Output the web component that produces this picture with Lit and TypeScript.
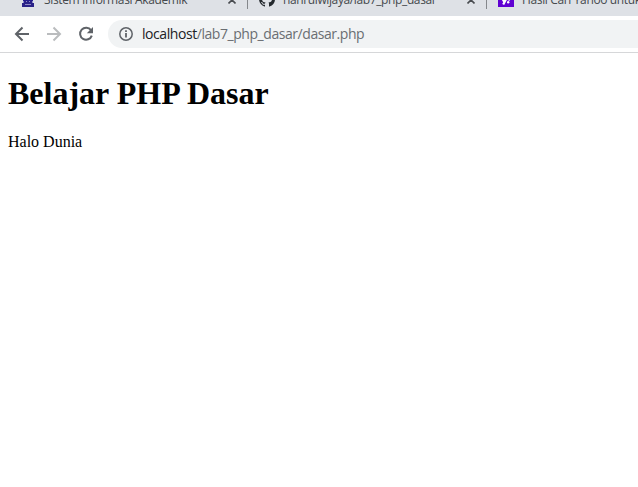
import { LitElement, html, css, svg } from "lit";
import { customElement } from "lit/decorators.js";

const campus = svg`<path fill="#241c8c" d="M3 0h10v10H3z"/><path fill="#2a2288" d="M4 10h8v2H4zM2 12h12v4H2z"/><path fill="#8f8bc8" d="M3 10h1v2H3zM12 10h1v2h-1zM6 10h1v1H6zM9 10h1v1H9zM5 13h6v1H5z"/>`;
const github = svg`<path fill="#24292e" d="M8 0C3.58 0 0 3.58 0 8c0 3.54 2.29 6.53 5.47 7.59.4.07.55-.17.55-.38 0-.19-.01-.82-.01-1.49-2.01.37-2.53-.49-2.69-.94-.09-.23-.48-.94-.82-1.13-.28-.15-.68-.52-.01-.53.63-.01 1.08.58 1.23.82.72 1.21 1.87.87 2.33.66.07-.52.28-.87.51-1.07-1.78-.2-3.64-.89-3.64-3.95 0-.87.31-1.59.82-2.15-.08-.2-.36-1.02.08-2.12 0 0 .67-.21 2.2.82a7.6 7.6 0 0 1 4 0c1.53-1.04 2.2-.82 2.2-.82.44 1.1.16 1.92.08 2.12.51.56.82 1.27.82 2.15 0 3.07-1.87 3.75-3.65 3.95.29.25.54.73.54 1.48 0 1.07-.01 1.93-.01 2.2 0 .21.15.46.55.38A8 8 0 0 0 16 8c0-4.42-3.58-8-8-8z"/>`;
const yahoo = svg`<path fill="#6001d2" d="M0 0h16v16H0z"/><path fill="none" stroke="#fff" stroke-width="2.2" d="M3.2 5.500 6 10.500M9 6.500 5.200 13.500"/><path fill="none" stroke="#fff" stroke-width="2.2" d="M12.500 4 10.800 9.500"/><circle cx="10.200" cy="11.200" r="1.200" fill="#fff"/>`;

@customElement("app-root")
export class AppRoot extends LitElement {
  static styles = css`
    :host { display: block; height: 487px; background: #fff; overflow: hidden; }
    .tabs { display: flex; height: 16px; background: #dee1e6; overflow: hidden; font: 12px/16px "Open Sans", "Noto Sans", sans-serif; color: #45494d; }
    .tab { display: flex; flex: none; width: 238px; height: 16px; margin-top: -9px; padding-left: 11px; box-sizing: border-box; }
    .tab:first-child { width: 247px; padding-left: 20px; }
    .tab svg { flex: none; width: 16px; height: 16px; }
    .title { flex: none; width: 181px; margin: 1px 0 0 8px; white-space: nowrap; letter-spacing: -0.36px; }
    .repo { letter-spacing: -0.38px; }
    .tab .close { width: 8px; height: 8px; margin: 5px 0 0 3px; }
    .sep { flex: none; width: 1px; height: 9px; background: #85888c; }
    .bar { display: flex; align-items: center; height: 36px; padding-left: 14px; border-bottom: 1px solid #d6d7d9; }
    .nav { flex: none; width: 16px; height: 16px; margin-right: 16px; }
    .reload { margin-right: 14px; }
    .address { display: flex; align-items: center; flex: 1; height: 28px; padding-left: 10px; border-radius: 14px 0 0 14px; background: #f1f3f4; font: 14px/20px "Open Sans", "Noto Sans", sans-serif; letter-spacing: -0.44px; color: #6a6e72; white-space: nowrap; }
    .info { width: 16px; height: 16px; margin-right: 8px; }
    .host { color: #202124; }
    .page { padding: 0 8px; font: 16px/18px "Liberation Serif", serif; color: #000; }
    h1 { margin: 22px 0 21px; font-size: 32px; line-height: 37px; font-weight: bold; }
    p { margin: 0; }
  `;

  private tab(icon: unknown, title: string, cls = "") {
    return html`<div class="tab">
      <svg viewBox="0 0 16 16">${icon}</svg>
      <span class="title ${cls}">${title}</span>
      <svg class="close" viewBox="0 0 8 8"><path d="M.5.5l7 7M7.5.5l-7 7" stroke="#494c50" stroke-width="1.6"/></svg>
    </div>`;
  }

  render() {
    return html`
      <div class="tabs">
        ${this.tab(campus, "Sistem Informasi Akademik")}<i class="sep"></i>
        ${this.tab(github, "hanrulwijaya/lab7_php_dasar", "repo")}<i class="sep"></i>
        ${this.tab(yahoo, "Hasil Cari Yahoo untuk")}
      </div>
      <div class="bar">
        <svg class="nav" viewBox="0 0 16 16"><path d="M15 8H2M8.5 1.5 2 8l6.500 6.500" fill="none" stroke="#5f6368" stroke-width="2"/></svg>
        <svg class="nav" viewBox="0 0 16 16"><path d="M1 8h13M7.500 1.500 14 8l-6.500 6.500" fill="none" stroke="#babcbe" stroke-width="2"/></svg>
        <svg class="nav reload" viewBox="0 0 16 16"><path d="M13 4.200A6 6 0 1 0 13.800 9.600" fill="none" stroke="#5f6368" stroke-width="2"/><path d="M15 1v6.200H8.800z" fill="#5f6368"/></svg>
        <div class="address">
          <svg class="info" viewBox="0 0 16 16"><circle cx="8" cy="8" r="6.200" fill="none" stroke="#5f6368" stroke-width="1.500"/><path d="M7.100 7h1.800v4.500H7.100zM7.100 4.300h1.800V6H7.100z" fill="#5f6368"/></svg>
          <span class="url"><span class="host">localhost</span>/lab7_php_dasar/dasar.php</span>
        </div>
      </div>
      <main class="page"><h1>Belajar PHP Dasar</h1><p>Halo Dunia</p></main>
    `;
  }
}
